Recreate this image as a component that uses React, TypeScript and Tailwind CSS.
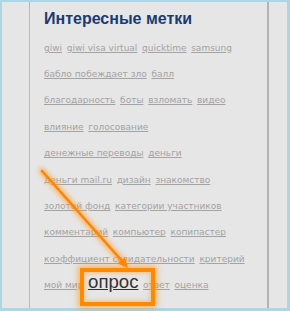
import React from "react";

const rows: string[][] = [
  ["giwi", "giwi visa virtual", "quicktime", "samsung"],
  ["бабло побеждает зло", "балл"],
  ["благодарность", "боты", "взломать", "видео"],
  ["влияние", "голосование"],
  ["денежные переводы", "деньги"],
  ["деньги mail.ru", "дизайн", "знакомство"],
  ["золотой фонд", "категории участников"],
  ["комментарий", "компьютер", "копипастер"],
  ["коэффициент созидательности", "критерий"],
  ["мой мир", "*опрос", "ответ", "оценка"],
];

export default function App() {
  return (
    <div className="relative w-[290px] h-[311px] bg-[#acd6e4] pt-[2px] pl-[2px] pr-[3px] pb-[3px] overflow-hidden">
      <div className="flex h-full bg-[#e6e6e6]">
        <div className="w-[27px] shrink-0" />
        <div className="w-[240px] shrink-0 border-l border-l-[#b9b9b9] border-r-2 border-r-[#b3b3b3] pl-[14px] pt-[8px]">
          <div className="text-[16px] leading-[18px] font-bold text-[#1c3a70] font-['Liberation_Sans',Arial,sans-serif] mb-[6.7px]">
            Интересные метки
          </div>
          <div className="font-['DejaVu_Sans',Verdana,sans-serif] text-[9px] leading-[26.4px] text-[#a3a3a3]">
            {rows.map((r, i) => (
              <div key={i} className="whitespace-nowrap h-[26.4px]">
                {r.map((t, j) =>
                  t.startsWith("*") ? (
                    <span
                      key={j}
                      className="underline text-[#333333] text-[18.6px] leading-[12px] font-['Liberation_Sans',Arial,sans-serif] mr-[4.5px]"
                    >
                      {t.slice(1)}
                    </span>
                  ) : (
                    <span key={j} className={"underline " + (j < r.length - 1 ? "mr-[4.7px]" : "")}>
                      {t}
                    </span>
                  )
                )}
              </div>
            ))}
          </div>
        </div>
        <div className="flex-1" />
      </div>

      {/* highlight box */}
      <div className="absolute left-[80px] top-[268px] w-[75px] h-[38px] border-[4px] border-[#ff8a00] shadow-[0_0_6px_2px_rgba(255,140,0,0.55),inset_0_0_5px_1px_rgba(255,140,0,0.45)]" />

      {/* arrow */}
      <svg className="absolute left-0 top-0 pointer-events-none" width="290" height="311" viewBox="0 0 290 311">
        <defs>
          <filter id="glow" x="-20%" y="-20%" width="140%" height="140%">
            <feGaussianBlur stdDeviation="2.5" />
          </filter>
        </defs>
        <g filter="url(#glow)" opacity="0.7">
          <line x1="42" y1="171" x2="122" y2="261" stroke="#ff9a2a" strokeWidth="6" strokeLinecap="round" />
          <polygon points="128,268 117.8,263.6 124.8,257.4" fill="#ff9a2a" />
        </g>
        <line x1="42" y1="171" x2="122" y2="261" stroke="#ff8500" strokeWidth="2.6" strokeLinecap="round" />
        <polygon points="128,268 117.8,263.6 124.8,257.4" fill="#ff8500" />
      </svg>
    </div>
  );
}
